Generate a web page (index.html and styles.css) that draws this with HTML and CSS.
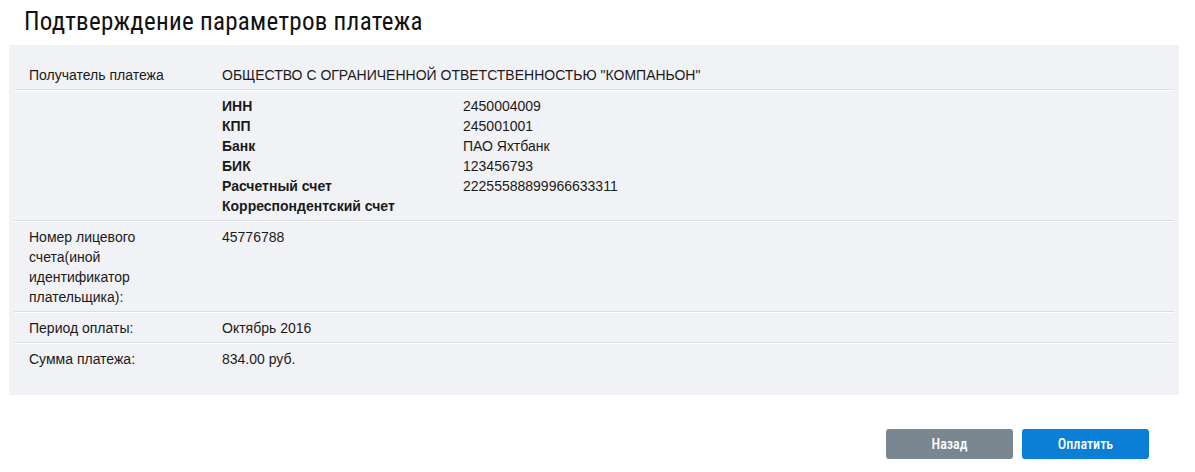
FILE: index.html
```html
<!DOCTYPE html>
<html lang="ru">
<head>
<meta charset="utf-8">
<title>Подтверждение параметров платежа</title>
<link rel="stylesheet" href="styles.css">
</head>
<body>
<div class="page">
  <h1 class="title">Подтверждение параметров платежа</h1>
  <div class="panel">
    <div class="row">
      <div class="label">Получатель платежа</div>
      <div class="value">ОБЩЕСТВО С ОГРАНИЧЕННОЙ ОТВЕТСТВЕННОСТЬЮ "КОМПАНЬОН"</div>
    </div>
    <div class="row">
      <div class="label"></div>
      <div class="value">
        <div class="details">
          <div class="dkey">ИНН</div><div class="dval">2450004009</div>
          <div class="dkey">КПП</div><div class="dval">245001001</div>
          <div class="dkey">Банк</div><div class="dval">ПАО Яхтбанк</div>
          <div class="dkey">БИК</div><div class="dval">123456793</div>
          <div class="dkey">Расчетный счет</div><div class="dval">22255588899966633311</div>
          <div class="dkey">Корреспондентский счет</div><div class="dval"></div>
        </div>
      </div>
    </div>
    <div class="row">
      <div class="label">Номер лицевого счета(иной идентификатор плательщика):</div>
      <div class="value">45776788</div>
    </div>
    <div class="row">
      <div class="label">Период оплаты:</div>
      <div class="value">Октябрь 2016</div>
    </div>
    <div class="row last">
      <div class="label">Сумма платежа:</div>
      <div class="value">834.00 руб.</div>
    </div>
  </div>
  <div class="actions">
    <button class="btn btn-back" type="button">Назад</button>
    <button class="btn btn-pay" type="button">Оплатить</button>
  </div>
</div>
</body>
</html>
```

FILE: styles.css
```css
html, body {
  margin: 0;
  padding: 0;
  background: #ffffff;
}

.page {
  padding: 0 16px 0 9px;
  font-family: "Liberation Sans", Arial, sans-serif;
  font-size: 14px;
  color: #1a1a1a;
}

.title {
  margin: 8px 0 9px 15px;
  font-family: "Roboto Condensed", Roboto, "Liberation Sans", sans-serif;
  font-stretch: condensed;
  font-weight: 400;
  font-size: 25px;
  letter-spacing: 0.28px;
  line-height: 28px;
  color: #111111;
}

.panel {
  background: #f1f2f6;
  padding: 20px 5px 22px 5px;
}

.row {
  display: grid;
  grid-template-columns: 150px 1fr;
  column-gap: 43px;
  padding: 6px 15px 4px 15px;
  line-height: 20px;
  border-bottom: 1px solid #dcdde0;
  box-shadow: 0 1px 0 #ffffff;
}

.row:first-child {
  padding-top: 0;
}

.row.last {
  border-bottom: none;
  box-shadow: none;
}

.details {
  display: grid;
  grid-template-columns: 241px 1fr;
}

.dkey {
  font-weight: 700;
}

.actions {
  display: flex;
  justify-content: flex-end;
  gap: 9px;
  padding: 34px 30px 0 0;
}

.btn {
  width: 127px;
  height: 30px;
  border: none;
  border-radius: 3px;
  color: #ffffff;
  font-family: "Roboto Condensed", Roboto, "Liberation Sans", sans-serif;
  font-stretch: condensed;
  font-weight: 500;
  font-size: 14px;
  cursor: pointer;
}

.btn-back {
  background: #7a8790;
}

.btn-pay {
  background: #0b7fd6;
}
```
